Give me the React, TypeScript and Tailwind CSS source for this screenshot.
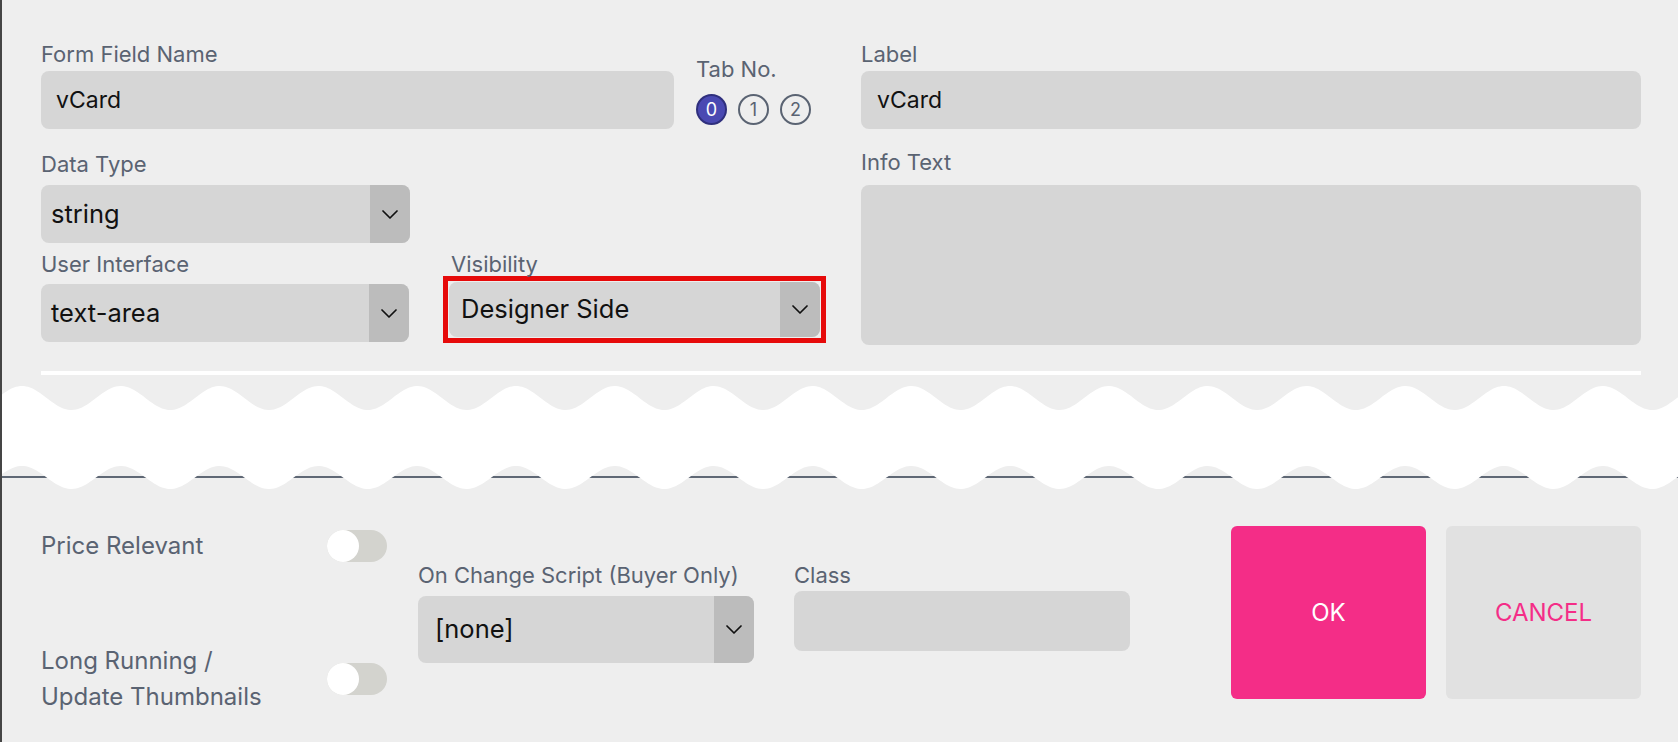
import type { ReactNode } from 'react'

const labelCls = "block h-[28px] text-[22px] leading-[28px] text-[#5a6372]"

function Chevron() {
  return (
    <svg width="16" height="9" viewBox="0 0 16 9" fill="none">
      <polyline points="1,1 8,8 15,1" stroke="#111" strokeWidth="1.7" strokeLinecap="round" strokeLinejoin="round" />
    </svg>
  )
}

function Select({ value, className, padL }: { value: string; className: string; padL: string }) {
  return (
    <div className={`flex overflow-hidden rounded-[8px] bg-[#d6d6d6] ${className}`}>
      <span className={`flex flex-1 items-center text-[25.5px] text-[#111] ${padL}`}>{value}</span>
      <span className="flex w-[40px] items-center justify-center bg-[#bcbcbc]">
        <Chevron />
      </span>
    </div>
  )
}

function Toggle() {
  return (
    <div className="flex h-[32px] w-[60px] items-center rounded-full bg-[#d3d3ce]">
      <div className="h-[32px] w-[32px] rounded-full bg-white" />
    </div>
  )
}

function TabDot({ n, active }: { n: number; active?: boolean }) {
  return (
    <div
      className={
        active
          ? "flex h-[31px] w-[31px] items-center justify-center rounded-full border-2 border-[#2f2f7d] bg-[#4a49b2] text-[18px] text-white"
          : "flex h-[31px] w-[31px] items-center justify-center rounded-full border-2 border-[#5a6372] text-[18px] text-[#5a6372]"
      }
    >
      {n}
    </div>
  )
}

function Field({ label, children, className }: { label: string; children: ReactNode; className?: string }) {
  return (
    <div className={className}>
      <span className={labelCls}>{label}</span>
      {children}
    </div>
  )
}

// wavy "cut" strip drawn over the gap between both parts of the dialog
function WaveCut() {
  const period = 98.8
  const top: string[] = []
  const bottom: string[] = []
  for (let x = 0; x <= 1680; x += 2) {
    const c = Math.cos((2 * Math.PI * (x - 22)) / period)
    top.push(`${x},${(18 - 12 * c).toFixed(2)}`)
    bottom.push(`${x},${(97.5 - 11.5 * c).toFixed(2)}`)
  }
  const d = `M${top.join(' L')} L${bottom.reverse().join(' L')} Z`
  return (
    <svg className="absolute -left-[2px] top-[380px]" width="1680" height="115" viewBox="0 0 1680 115">
      <path d={d} fill="#ffffff" />
    </svg>
  )
}

export default function App() {
  return (
    <div className="relative h-[742px] w-full overflow-hidden border-l-2 border-[#454545] bg-[#eeeeee] font-['Inter',sans-serif]">
      <div className="pl-[39px] pr-[37px] pt-[40px]">
        <div className="flex gap-[35px]">
          <div className="w-[785px]">
            <div className="flex">
              <Field label="Form Field Name" className="w-[633px]">
                <input
                  readOnly
                  value="vCard"
                  className="mt-[3px] h-[58px] w-full rounded-[8px] bg-[#d6d6d6] pl-[15px] text-[23px] text-[#111] outline-none"
                />
              </Field>
              <div className="ml-[22px] pt-[15px]">
                <span className={labelCls}>Tab No.</span>
                <div className="mt-[11px] flex gap-[11px]">
                  <TabDot n={0} active />
                  <TabDot n={1} />
                  <TabDot n={2} />
                </div>
              </div>
            </div>

            <Field label="Data Type" className="mt-[21px] w-[369px]">
              <Select value="string" className="mt-[7px] h-[58px]" padL="pl-[10px]" />
            </Field>

            <div className="mt-[7px] flex">
              <Field label="User Interface" className="w-[369px]">
                <Select value="text-area" className="mt-[6px] h-[58px]" padL="pl-[10px]" />
              </Field>
              <div className="ml-[34px] w-[384px]">
                <span className={`${labelCls} -mb-[2px] pl-[8px]`}>Visibility</span>
                <div className="border-[5px] border-[#e60a0a] p-[1px]">
                  <Select value="Designer Side" className="h-[55px]" padL="pl-[12px]" />
                </div>
              </div>
            </div>
          </div>

          <div className="flex-1">
            <Field label="Label">
              <input
                readOnly
                value="vCard"
                className="mt-[3px] h-[58px] w-full rounded-[8px] bg-[#d6d6d6] pl-[16px] text-[23px] text-[#111] outline-none"
              />
            </Field>
            <Field label="Info Text" className="mt-[19px]">
              <textarea readOnly className="mt-[9px] block h-[160px] w-full resize-none rounded-[8px] bg-[#d6d6d6] outline-none" />
            </Field>
          </div>
        </div>
        <div className="mt-[26px] h-[4px] bg-white" />
      </div>

      <div className="mt-[101px] flex h-[266px] items-start border-t-2 border-[#5f6875] pl-[39px]">
        <div className="mt-[50px] w-[346px]">
          <div className="flex h-[36px] items-center justify-between">
            <span className="text-[24px] leading-[36px] text-[#5a6372]">Price Relevant</span>
            <Toggle />
          </div>
          <div className="mt-[79px] flex h-[72px] items-center justify-between">
            <span className="text-[24px] leading-[36px] text-[#5a6372]">
              Long Running /<br />
              Update Thumbnails
            </span>
            <Toggle />
          </div>
        </div>

        <Field label="On Change Script (Buyer Only)" className="ml-[31px] mt-[83px] w-[336px]">
          <Select value="[none]" className="mt-[7px] h-[67px]" padL="pl-[17px]" />
        </Field>

        <Field label="Class" className="ml-[40px] mt-[83px] w-[336px]">
          <input readOnly value="" className="mt-[2px] h-[60px] w-full rounded-[8px] bg-[#d6d6d6] outline-none" />
        </Field>

        <button className="ml-[101px] mt-[48px] h-[173px] w-[195px] rounded-[6px] bg-[#f42d87] text-[24px] uppercase text-white">
          OK
        </button>
        <button className="ml-[20px] mt-[48px] h-[173px] w-[195px] rounded-[6px] bg-[#e1e1e1] text-[24px] uppercase text-[#f42d87]">
          Cancel
        </button>
      </div>

      <WaveCut />
    </div>
  )
}
